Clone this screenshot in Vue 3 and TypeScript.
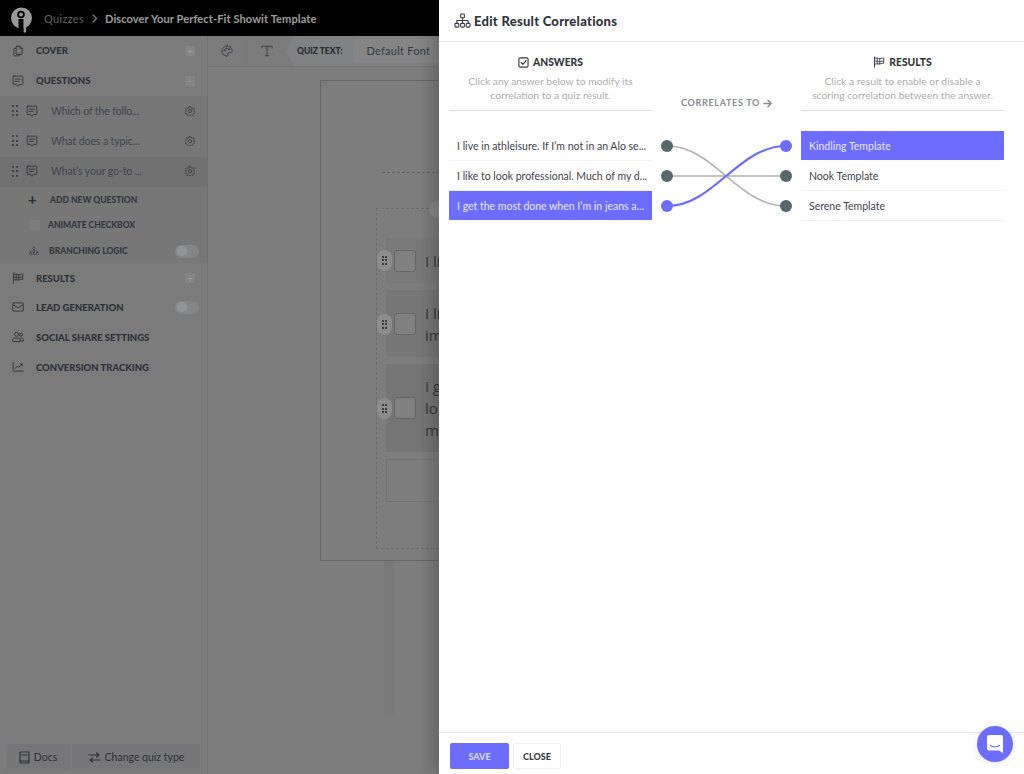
<script setup lang="ts">
interface Row { icon: string; label: string; action?: 'plus' | 'minus' | 'toggle' }

const topRows: Row[] = [
  { icon: 'i-pages', label: 'COVER', action: 'plus' },
  { icon: 'i-chat', label: 'QUESTIONS', action: 'minus' },
]
const bottomRows: Row[] = [
  { icon: 'i-flag', label: 'RESULTS', action: 'plus' },
  { icon: 'i-mail', label: 'LEAD GENERATION', action: 'toggle' },
  { icon: 'i-users', label: 'SOCIAL SHARE SETTINGS' },
  { icon: 'i-chart', label: 'CONVERSION TRACKING' },
]
const questions = [
  { text: 'Which of the follo...', active: false },
  { text: 'What does a typic...', active: false },
  { text: 'What’s your go-to ...', active: true },
]
const canvasAnswers = [
  { lines: ['I li'], cls: 'one' },
  { lines: ['I li', 'im'], cls: 'two' },
  { lines: ['I g', 'lo', 'm'], cls: 'three' },
]
const answers = [
  { text: 'I live in athleisure. If I’m not in an Alo se...', active: false },
  { text: 'I like to look professional. Much of my d...', active: false },
  { text: 'I get the most done when I’m in jeans a...', active: true },
]
const results = [
  { text: 'Kindling Template', active: true },
  { text: 'Nook Template', active: false },
  { text: 'Serene Template', active: false },
]
const dotRows = [16, 46, 76]
</script>

<template>
  <div class="app">
    <svg class="defs" width="0" height="0" aria-hidden="true">
      <symbol id="i-pages" viewBox="0 0 16 16"><path d="M6.500 1.500h4l3 3v7a1 1 0 0 1-1 1h-6a1 1 0 0 1-1-1v-9a1 1 0 0 1 1-1z M10.500 1.500v3h3 M5.500 4.500h-2a1 1 0 0 0-1 1v8a1 1 0 0 0 1 1h6a1 1 0 0 0 1-1v-1.500" /></symbol>
      <symbol id="i-chat" viewBox="0 0 16 16"><path d="M2.500 1.500h11a1 1 0 0 1 1 1v9a1 1 0 0 1-1 1h-3.500l-2 2.500-2-2.500H2.500a1 1 0 0 1-1-1v-9a1 1 0 0 1 1-1z M4.500 5.500h7 M4.500 8.500h5" /></symbol>
      <symbol id="i-flag" viewBox="0 0 16 16"><path d="M2 1.500v13.500 M2 3c3-1.500 4.500 1 7 .5s3-1 5.500-.5l-.5 7c-2.500-.5-3.500.2-5.500.5S4.500 10 2 11 M2 7c3-1.500 4.500 1 7 .5s3-1 5-.5 M5.500 3v7.500 M9 3.500v7.500" /></symbol>
      <symbol id="i-mail" viewBox="0 0 16 16"><path d="M2 2.500h12a1 1 0 0 1 1 1v9a1 1 0 0 1-1 1H2a1 1 0 0 1-1-1v-9a1 1 0 0 1 1-1z M1.500 5 8 9l6.500-4" /></symbol>
      <symbol id="i-users" viewBox="0 0 16 16"><circle cx="6" cy="4.500" r="2.700" /><circle cx="12" cy="5" r="2" /><path d="M1 13.500v-1.500a2.500 2.500 0 0 1 2.500-2.500h5a2.500 2.500 0 0 1 2.500 2.500v1.500z M11.500 9.500h1.500a2 2 0 0 1 2 2v2h-3" /></symbol>
      <symbol id="i-chart" viewBox="0 0 16 16"><path d="M1.500 2v11.500h13.500 M4 10l3-3 2 1.500 4.500-4.500 M11 4h2.500v2.500" /></symbol>
      <symbol id="i-tree" viewBox="0 0 18 16"><rect x="7" y="1" width="4" height="4" rx=".8" /><rect x="1" y="11" width="4" height="4" rx=".8" /><rect x="7" y="11" width="4" height="4" rx=".8" /><rect x="13" y="11" width="4" height="4" rx=".8" /><path d="M9 5v6 M3 11V8h12v3" /></symbol>
    </svg>

    <header class="topbar">
      <svg class="logo" width="24" height="26" viewBox="0 0 24 26">
        <circle cx="11.500" cy="11" r="10.500" fill="#fff" />
        <circle cx="11" cy="7.500" r="3.800" fill="#000" />
        <circle cx="11" cy="7.500" r="2" fill="#fff" />
        <path d="M13.500 12h2.600v13.500h-2.600z" fill="#fff" />
        <path d="M8.500 12h4.900v14H8.500z" fill="#000" />
      </svg>
      <span class="crumb">Quizzes</span>
      <svg class="chev" width="6" height="9" viewBox="0 0 6 9"><path d="M1 1l3.500 3.500L1 8" /></svg>
      <span class="crumb-title">Discover Your Perfect-Fit Showit Template</span>
    </header>

    <div class="work">
      <aside class="sidebar">
        <div v-for="row in topRows" :key="row.label" class="nav-row">
          <svg class="ic"><use :href="'#' + row.icon" /></svg>
          <span class="nav-label">{{ row.label }}</span>
          <span class="sq">{{ row.action === 'plus' ? '+' : '−' }}</span>
        </div>

        <div class="sub">
          <div v-for="q in questions" :key="q.text" class="q-row" :class="{ active: q.active }">
            <span class="grip"><i v-for="n in 6" :key="n" /></span>
            <svg class="ic small"><use href="#i-chat" /></svg>
            <span class="q-text">{{ q.text }}</span>
            <svg class="gear" width="10" height="10" viewBox="0 0 12 12">
              <path d="M5 .8h2l.4 1.400 1.300.6 1.300-.7 1.300 1.500-.8 1.200.3 1.400 1.300.7-.4 2-1.500.1-.9 1.100.3 1.500-1.900.7-.9-1.200H5.100l-.9 1.200-1.900-.7.300-1.500-.9-1.100-1.500-.1-.4-2 1.300-.7.300-1.400-.8-1.200 1.300-1.500 1.300.7 1.300-.6z" />
              <circle cx="6" cy="6.200" r="2" />
            </svg>
          </div>
          <div class="sub-row add">
            <span class="plus">+</span>
            <span>ADD NEW QUESTION</span>
          </div>
          <div class="sub-row anim">
            <span class="box" />
            <span>ANIMATE CHECKBOX</span>
          </div>
          <div class="sub-row branch">
            <svg class="ic tree"><use href="#i-tree" /></svg>
            <span class="branch-label">BRANCHING LOGIC</span>
            <span class="toggle"><i /></span>
          </div>
        </div>

        <div v-for="row in bottomRows" :key="row.label" class="nav-row">
          <svg class="ic"><use :href="'#' + row.icon" /></svg>
          <span class="nav-label">{{ row.label }}</span>
          <span v-if="row.action === 'plus'" class="sq">+</span>
          <span v-else-if="row.action === 'toggle'" class="toggle"><i /></span>
        </div>

        <div class="side-foot">
          <button class="foot-btn docs">
            <svg width="11" height="13" viewBox="0 0 11 13"><path d="M1 11V2a1 1 0 0 1 1-1h8v9H2a1 1 0 0 0-1 1 1 1 0 0 0 1 1h8v-2 M3 4h5" /></svg>
            Docs
          </button>
          <button class="foot-btn change">
            <svg width="13" height="11" viewBox="0 0 13 11"><path d="M1 3h10M8.500 1 11 3 8.500 5 M12 8H2M4.500 6 2 8l2.500 2" /></svg>
            Change quiz type
          </button>
        </div>
      </aside>

      <main class="main">
        <div class="toolbar">
          <span class="tool">
            <svg width="12" height="12" viewBox="0 0 14 14"><path d="M7 1a6 6 0 0 0 0 12c1.500 0 1.600-1 1-1.800-.6-1 0-2.200 1.200-2.200H11c1.300 0 2-1 2-2.300C13 3.200 10.500 1 7 1z" /><circle cx="4" cy="6" r=".7" /><circle cx="6.500" cy="4" r=".7" /><circle cx="9.500" cy="4.800" r=".7" /></svg>
          </span>
          <span class="tool">
            <svg width="12" height="12" viewBox="0 0 14 14"><path d="M1 3.500V1.500h12v2 M7 1.500v11 M5 12.500h4" /></svg>
          </span>
          <div class="quiz-area">
            <span class="quiz-text">QUIZ TEXT:</span>
            <span class="font-select">Default Font</span>
          </div>
        </div>
        <div class="stage">
          <section class="page">
            <div class="dash-line" />
            <div class="dash-box">
              <span class="top-knob" />
              <div v-for="a in canvasAnswers" :key="a.cls" class="answer" :class="a.cls">
                <span class="handle"><i v-for="n in 6" :key="n" /></span>
                <span class="check" />
                <span class="answer-text"><span v-for="l in a.lines" :key="l">{{ l }}</span></span>
              </div>
              <div class="answer-empty" />
            </div>
          </section>
          <div class="below" />
        </div>
      </main>
    </div>

    <div class="overlay" />

    <aside class="drawer">
      <div class="d-head">
        <svg class="d-head-ic"><use href="#i-tree" /></svg>
        <h1>Edit Result Correlations</h1>
      </div>

      <div class="d-body">
        <div class="col">
          <div class="col-head">
            <h2>
              <svg width="11" height="11" viewBox="0 0 12 12"><rect x="1" y="1" width="10" height="10" rx="1.500" /><path d="M3.500 6l2 2 3.200-4" /></svg>
              ANSWERS
            </h2>
            <p>Click any answer below to modify its correlation to a quiz result.</p>
          </div>
          <ul class="list">
            <li v-for="a in answers" :key="a.text" :class="{ on: a.active }">{{ a.text }}</li>
          </ul>
        </div>

        <div class="mid">
          <div class="mid-label">
            CORRELATES TO
            <svg width="9" height="9" viewBox="0 0 10 10"><path d="M1 5h8M5.500 1.500 9 5l-3.500 3.500" /></svg>
          </div>
          <svg class="links" width="148" height="92" viewBox="0 0 148 92">
            <path class="ln" d="M15 16C62 16 86 76 134 76" />
            <path class="ln" d="M15 46H134" />
            <path class="ln on" d="M15 76C62 76 86 16 134 16" />
            <circle v-for="(y, i) in dotRows" :key="'l' + y" cx="15" :cy="y" r="6" :fill="i === 2 ? '#6c6cff' : '#55686c'" />
            <circle v-for="(y, i) in dotRows" :key="'r' + y" cx="134" :cy="y" r="6" :fill="i === 0 ? '#6c6cff' : '#55686c'" />
          </svg>
        </div>

        <div class="col">
          <div class="col-head">
            <h2>
              <svg width="12" height="12" viewBox="0 0 16 16"><use href="#i-flag" /></svg>
              RESULTS
            </h2>
            <p>Click a result to enable or disable a scoring correlation between the answer.</p>
          </div>
          <ul class="list">
            <li v-for="r in results" :key="r.text" :class="{ on: r.active }">{{ r.text }}</li>
          </ul>
        </div>
      </div>

      <div class="d-foot">
        <button class="save">SAVE</button>
        <button class="close">CLOSE</button>
      </div>
    </aside>

    <button class="chat" aria-label="Chat">
      <svg width="16" height="18" viewBox="0 0 16 18">
        <path d="M2 0h12a2 2 0 0 1 2 2v16l-4-2.500H2a2 2 0 0 1-2-2V2a2 2 0 0 1 2-2z" fill="#fff" />
        <path d="M3.500 10.500c2.500 1.800 6.500 1.800 9 0" fill="none" stroke="#6c6cff" stroke-width="1.200" stroke-linecap="round" />
      </svg>
    </button>
  </div>
</template>

<style>
html, body { margin: 0; overflow: hidden; }
</style>

<style scoped>
* { box-sizing: border-box; }
.defs { position: absolute; }
symbol, .ic, .gear, .tool svg, .foot-btn svg, .chev, h2 svg, .mid-label svg, .d-head-ic {
  fill: none;
  stroke: currentColor;
  stroke-width: 1.200;
  stroke-linecap: round;
  stroke-linejoin: round;
}
.app {
  position: relative;
  width: 1024px;
  height: 774px;
  overflow: hidden;
  display: flex;
  flex-direction: column;
  font-family: Lato, "Liberation Sans", sans-serif;
  background: #d0d0d0;
  color: #50545f;
}
button { font-family: inherit; cursor: pointer; }

/* top bar */
.topbar {
  height: 36px;
  flex: none;
  background: #000;
  display: flex;
  align-items: center;
  padding-left: 10px;
  font-size: 11px;
  font-weight: 700;
}
.logo { margin-right: 10px; margin-top: 4px; flex: none; }
.crumb { color: #a0a0a0; letter-spacing: .3px; font-weight: 400; }
.chev { margin: 0 7px 0 8px; color: #ccc; }
.crumb-title { color: #fff; letter-spacing: .12px; }

.work { flex: 1; display: flex; min-height: 0; }

/* sidebar */
.sidebar {
  width: 208px;
  flex: none;
  display: flex;
  flex-direction: column;
  background: #cecece;
  border-right: 1px solid #bdbdbd;
  position: relative;
}
.nav-row {
  height: 30px;
  flex: none;
  display: flex;
  align-items: center;
  padding: 0 8px 1px 12px;
  font-size: 9.500px;
  font-weight: 900;
  color: #4c505b;
}
.sub + .nav-row { padding-top: 1px; padding-bottom: 0; }
.ic { width: 12px; height: 12px; flex: none; color: #50545f; stroke-width: 1.400; }
.nav-label { margin-left: 12px; flex: 1; white-space: nowrap; }
.sq {
  width: 10px;
  height: 10px;
  margin-right: 4px;
  background: #dcdcdc;
  color: #fff;
  font-size: 10px;
  line-height: 10px;
  text-align: center;
  border-radius: 1px;
  font-weight: 700;
}
.sub { background: #c6c7c9; flex: none; }
.q-row {
  height: 30.300px;
  display: flex;
  align-items: center;
  padding: 0 9px 1px 12px;
  font-size: 10.500px;
  color: #6c707c;
}
.q-row.active { background: #bcbdbf; }
.grip { width: 7px; height: 11px; display: grid; grid-template-columns: 2px 2px; gap: 2.500px 2px; flex: none; }
.grip i { width: 2px; height: 2px; background: #6c7079; }
.ic.small { margin-left: 7px; }
.q-text { margin-left: 13px; flex: 1; white-space: nowrap; letter-spacing: -.1px; }
.gear { color: #60646e; margin-right: 3px; stroke-width: 1; flex: none; }
.sub-row {
  display: flex;
  align-items: center;
  font-size: 8.500px;
  font-weight: 900;
  color: #565a65;
  white-space: nowrap;
}
.add { height: 25px; padding: 1px 0 0 28px; }
.plus { width: 22px; font-size: 15px; font-weight: 700; color: #454a55; line-height: 1; }
.anim { height: 26px; padding: 1px 0 0 29px; }
.box { width: 12px; height: 12px; border: 1px solid #c8c8c8; background: #d0d0d0; margin-right: 7px; }
.branch { height: 25px; padding: 2px 8px 0 29px; }
.tree { width: 10px; height: 10px; margin-right: 10px; color: #6a6e7a; }
.branch-label { flex: 1; }
.toggle {
  width: 24px;
  height: 13px;
  border-radius: 7px;
  background: #dcdee2;
  padding: 1.500px;
  flex: none;
  display: block;
}
.toggle i { display: block; width: 10px; height: 10px; border-radius: 50%; background: #f6f6f6; }
.side-foot {
  position: absolute;
  left: 6px;
  bottom: 4px;
  display: flex;
  gap: 2px;
}
.foot-btn {
  height: 26px;
  border: 0;
  border-radius: 2px;
  background: #c6c7ca;
  color: #4c505b;
  font-size: 10.500px;
  display: flex;
  align-items: center;
  justify-content: center;
  gap: 4px;
}
.docs { width: 64px; }
.change { width: 128px; }

/* main */
.main { flex: 1; min-width: 0; display: flex; flex-direction: column; }
.toolbar {
  height: 31px;
  flex: none;
  background: #cecece;
  display: flex;
  align-items: center;
  border-bottom: 1px solid #c4c4c4;
}
.tool {
  width: 39px;
  height: 100%;
  display: flex;
  align-items: center;
  justify-content: center;
  border-right: 1px solid #c6c6c6;
  color: #5a5f6c;
}
.tool svg { stroke-width: 1; }
.tool + .tool { border-right: 0; }
.quiz-area {
  flex: 1;
  height: 100%;
  display: flex;
  align-items: center;
  background: #d6d7da;
  padding-left: 11px;
  clip-path: polygon(8px 0, 100% 0, 100% 100%, 8px 100%, 0 50%);
}
.quiz-text { font-size: 8.500px; font-weight: 900; color: #454a55; white-space: nowrap; }
.font-select {
  margin-left: 11px;
  padding: 0 14px 0 13px;
  height: 24px;
  line-height: 24px;
  font-size: 11px;
  letter-spacing: .25px;
  background: #dedede;
  border-radius: 4px;
  color: #5a5f6c;
  white-space: nowrap;
}
.stage { flex: 1; padding: 13px 0 0 112px; display: flex; flex-direction: column; position: relative; }
.page {
  width: 560px;
  height: 481px;
  flex: none;
  border: 1px solid #a8a8a8;
  position: relative;
  padding: 91px 0 0 55px;
}
.dash-line { border-top: 1px dashed #a4a4a4; margin: 0 0 35px 6px; }
.dash-box {
  position: relative;
  border: 1px dashed #b2b2b2;
  height: 341px;
  padding: 29px 0 0 9px;
}
.top-knob {
  position: absolute;
  left: 52px;
  top: -8px;
  width: 17px;
  height: 17px;
  border-radius: 50%;
  background: #e4e4e4;
}
.answer {
  position: relative;
  margin-bottom: 7px;
  display: flex;
  align-items: center;
  padding-left: 8px;
}
.answer.one { height: 45px; background: #cacaca; }
.answer.two { height: 67px; background: #c6c6c6; }
.answer.three { height: 88px; background: #c4c4c4; }
.handle {
  position: absolute;
  left: -9px;
  top: 50%;
  width: 15px;
  height: 21px;
  margin-top: -10px;
  border-radius: 8px;
  background: #ececec;
  display: grid;
  grid-template-columns: 2px 2px;
  justify-content: center;
  align-content: center;
  gap: 1.500px 1px;
}
.handle i { width: 2px; height: 2px; background: #666; }
.answer.one .handle { margin-top: -11px; }
.check {
  width: 22px;
  height: 22px;
  border: 1px solid #a8a8a8;
  border-radius: 3px;
  background: #d6d6d6;
  flex: none;
}
.answer-text {
  margin-left: 9px;
  font-size: 15px;
  line-height: 22px;
  color: #5c5c5c;
  display: flex;
  flex-direction: column;
  font-family: "Open Sans", sans-serif;
}
.answer-empty { height: 43px; border: 1px solid #c2c2c2; margin-top: 1px; }
.below { width: 11px; height: 155px; margin-left: 64px; background: #cbcbcb; }

.overlay { position: absolute; inset: 0; background: rgba(0, 0, 0, .4); }

/* drawer */
.drawer {
  position: absolute;
  left: 439px;
  top: 0;
  bottom: 0;
  right: 0;
  background: #fff;
  display: flex;
  flex-direction: column;
  box-shadow: -8px 0 14px rgba(0, 0, 0, .18);
  color: #33373f;
}
.d-head {
  height: 42px;
  flex: none;
  display: flex;
  align-items: center;
  padding-left: 15px;
  border-bottom: 1px solid #e5e5e5;
}
.d-head-ic { width: 17px; height: 15px; color: #3a3e46; stroke-width: 1.100; }
h1 { margin: 0 0 0 3px; font-size: 13px; font-weight: 900; letter-spacing: .27px; color: #30343c; }
.d-body {
  flex: 1;
  display: grid;
  grid-template-columns: 203px 149px 203px;
  padding: 0 20px 0 10px;
}
.col-head {
  height: 69px;
  padding-top: 14px;
  border-bottom: 1px solid #e0e0e0;
  text-align: center;
}
h2 {
  margin: 0;
  font-size: 10.300px;
  font-weight: 900;
  line-height: 12px;
  color: #33373f;
  display: flex;
  align-items: center;
  justify-content: center;
  gap: 4px;
}
.col-head p {
  margin: 6px auto 0;
  width: 190px;
  font-size: 10.300px;
  line-height: 14px;
  color: #aeaeae;
}
.list { list-style: none; margin: 20px 0 0; padding: 0; }
.list li {
  height: 30px;
  padding: 0 8px;
  line-height: 30px;
  font-size: 10.500px;
  color: #3f434b;
  white-space: nowrap;
  border-bottom: 1px solid #f2f2f2;
}
.list li.on { background: #6c6cff; color: #e9e9ff; border-bottom-color: #6c6cff; height: 29px; margin-bottom: 1px; }
.mid { display: flex; flex-direction: column; }
.mid-label {
  margin-top: 55px;
  height: 12px;
  line-height: 12px;
  font-size: 9px;
  font-weight: 700;
  letter-spacing: .7px;
  color: #8a8d92;
  display: flex;
  align-items: center;
  justify-content: center;
  gap: 3px;
  white-space: nowrap;
}
.mid-label svg { stroke-width: 1.600; }
.links { margin-top: 21px; display: block; }
.ln { fill: none; stroke: #b2b2b2; stroke-width: 1.600; }
.ln.on { stroke: #6c6cff; stroke-width: 2.200; }
.d-foot {
  height: 42px;
  flex: none;
  border-top: 1px solid #e5e5e5;
  display: flex;
  gap: 4px;
  padding: 10px 0 0 11px;
}
.save, .close {
  height: 26px;
  font-size: 9px;
  font-weight: 900;
  border-radius: 2px;
  border: 0;
}
.save { width: 59px; background: #6c6cff; color: #d8d8ff; }
.close { width: 48px; background: #fff; color: #3a3e46; border: 1px solid #f0f0f0; }
.chat {
  position: absolute;
  left: 977px;
  top: 726px;
  width: 36px;
  height: 36px;
  border-radius: 50%;
  background: #6c6cff;
  border: 0;
  padding: 0;
  display: flex;
  align-items: center;
  justify-content: center;
  box-shadow: 0 1px 6px rgba(0, 0, 0, .12);
}
</style>
